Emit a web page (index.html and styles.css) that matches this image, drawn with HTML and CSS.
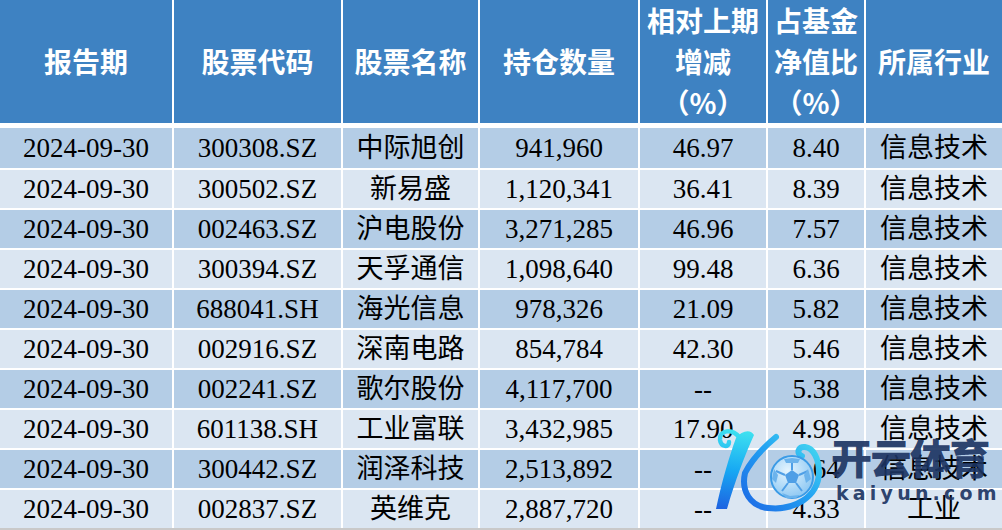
FILE: index.html
```html
<!DOCTYPE html>
<html lang="zh-CN">
<head>
<meta charset="utf-8">
<title>持仓</title>
<link rel="stylesheet" href="styles.css">
</head>
<body>
<div class="sheet">
  <div class="row head">
    <div class="cell">报告期</div>
    <div class="cell">股票代码</div>
    <div class="cell">股票名称</div>
    <div class="cell">持仓数量</div>
    <div class="cell multi">相对上期<br>增减<br>（%）</div>
    <div class="cell multi">占基金<br>净值比<br>（%）</div>
    <div class="cell">所属行业</div>
  </div>
  <div class="row data dark first">
    <div class="cell">2024-09-30</div><div class="cell">300308.SZ</div><div class="cell">中际旭创</div><div class="cell">941,960</div><div class="cell">46.97</div><div class="cell">8.40</div><div class="cell">信息技术</div>
  </div>
  <div class="row data light">
    <div class="cell">2024-09-30</div><div class="cell">300502.SZ</div><div class="cell">新易盛</div><div class="cell">1,120,341</div><div class="cell">36.41</div><div class="cell">8.39</div><div class="cell">信息技术</div>
  </div>
  <div class="row data dark">
    <div class="cell">2024-09-30</div><div class="cell">002463.SZ</div><div class="cell">沪电股份</div><div class="cell">3,271,285</div><div class="cell">46.96</div><div class="cell">7.57</div><div class="cell">信息技术</div>
  </div>
  <div class="row data light">
    <div class="cell">2024-09-30</div><div class="cell">300394.SZ</div><div class="cell">天孚通信</div><div class="cell">1,098,640</div><div class="cell">99.48</div><div class="cell">6.36</div><div class="cell">信息技术</div>
  </div>
  <div class="row data dark">
    <div class="cell">2024-09-30</div><div class="cell">688041.SH</div><div class="cell">海光信息</div><div class="cell">978,326</div><div class="cell">21.09</div><div class="cell">5.82</div><div class="cell">信息技术</div>
  </div>
  <div class="row data light">
    <div class="cell">2024-09-30</div><div class="cell">002916.SZ</div><div class="cell">深南电路</div><div class="cell">854,784</div><div class="cell">42.30</div><div class="cell">5.46</div><div class="cell">信息技术</div>
  </div>
  <div class="row data dark">
    <div class="cell">2024-09-30</div><div class="cell">002241.SZ</div><div class="cell">歌尔股份</div><div class="cell">4,117,700</div><div class="cell">--</div><div class="cell">5.38</div><div class="cell">信息技术</div>
  </div>
  <div class="row data light">
    <div class="cell">2024-09-30</div><div class="cell">601138.SH</div><div class="cell">工业富联</div><div class="cell">3,432,985</div><div class="cell">17.90</div><div class="cell">4.98</div><div class="cell">信息技术</div>
  </div>
  <div class="row data dark">
    <div class="cell">2024-09-30</div><div class="cell">300442.SZ</div><div class="cell">润泽科技</div><div class="cell">2,513,892</div><div class="cell">--</div><div class="cell">4.64</div><div class="cell">信息技术</div>
  </div>
  <div class="row data light">
    <div class="cell">2024-09-30</div><div class="cell">002837.SZ</div><div class="cell">英维克</div><div class="cell">2,887,720</div><div class="cell">--</div><div class="cell">4.33</div><div class="cell">工业</div>
  </div>

  <div class="watermark">
    <svg class="wm-logo" width="120" height="92" viewBox="0 0 120 92">
      <defs>
        <linearGradient id="g1" gradientUnits="userSpaceOnUse" x1="20" y1="4" x2="10" y2="86">
          <stop offset="0" stop-color="#3fe2f0"/>
          <stop offset="0.5" stop-color="#17a8f3"/>
          <stop offset="1" stop-color="#1e5fe0"/>
        </linearGradient>
        <linearGradient id="g2" gradientUnits="userSpaceOnUse" x1="30" y1="88" x2="108" y2="15">
          <stop offset="0" stop-color="#1c64e4"/>
          <stop offset="0.55" stop-color="#22a0f2"/>
          <stop offset="1" stop-color="#48def0"/>
        </linearGradient>
        <radialGradient id="gb" cx="0.4" cy="0.35" r="0.7">
          <stop offset="0" stop-color="#e4f5ff"/>
          <stop offset="1" stop-color="#8ac6f2"/>
        </radialGradient>
      </defs>
      <path d="M27 12 C20 3 7 5 8 15 C9 22 17 23 17 17" fill="none" stroke="url(#g1)" stroke-width="4.5" stroke-linecap="round"/>
      <path d="M24 13 C30 5 39 4 42 10 C33 30 23 56 15 84 L4 84 C10 56 17 32 24 13 Z" fill="url(#g1)"/>
      <path d="M64 12 C52 22 40 34 33 48 C29 66 38 81 56 83 C82 86 106 72 107 48 C107 33 101 23 93 22 C86 21 84 29 90 31" fill="none" stroke="url(#g2)" stroke-width="6" stroke-linecap="round" stroke-linejoin="round"/>
      <circle cx="80" cy="52" r="21" fill="url(#gb)" stroke="#3b9be6" stroke-width="2"/>
      <polygon points="80,45 87,50 84,58 76,58 73,50" fill="#4f9fe6"/>
      <path d="M80 45 L80 35 M87 50 L96 46 M84 58 L90 66 M76 58 L70 66 M73 50 L64 46" stroke="#4f9fe6" stroke-width="2"/>
      <path d="M72 34 L80 33 L88 34 L86 38 L74 38 Z" fill="#6bb3ec"/>
      <path d="M96 44 L99 54 L94 58 L92 50 Z" fill="#6bb3ec"/>
      <path d="M62 44 L66 50 L64 58 L60 54 Z" fill="#6bb3ec"/>
      <path d="M70 68 L78 71 L88 70 L84 73 L74 73 Z" fill="#6bb3ec"/>
    </svg>
    <div class="wm-cn">开云体育</div>
    <div class="wm-en">kaiyun.com</div>
  </div>
</div>
</body>
</html>
```
FILE: styles.css
```css
html, body {
  margin: 0;
  padding: 0;
}
body {
  background: #c9c9c9;
  width: 1002px;
  height: 530px;
  overflow: hidden;
}
.sheet {
  position: relative;
  width: 1002px;
  height: 528px;
  background: #ffffff;
  display: flex;
  flex-direction: column;
  gap: 2px;
  overflow: hidden;
}
.row {
  display: grid;
  grid-template-columns: 172px 167px 135px 158px 126px 96px 136px;
  column-gap: 2px;
  height: 38px;
  flex: none;
}
.cell {
  display: flex;
  align-items: center;
  justify-content: center;
  text-align: center;
  white-space: nowrap;
}
.head {
  height: 122px;
  margin-bottom: 4px;
}
.head .cell {
  background: #3e82c2;
  color: #ffffff;
  font-family: "Noto Sans CJK SC", "Liberation Sans", sans-serif;
  font-weight: 700;
  font-size: 28px;
  line-height: 41px;
}
.data .cell {
  font-family: "Liberation Serif", "Noto Sans CJK SC", serif;
  font-size: 27px;
  color: #000000;
  line-height: 1;
}
.first {
  height: 40px;
}
.dark .cell {
  background: #b4cde6;
}
.light .cell {
  background: #dbe6f2;
}
.watermark {
  position: absolute;
  left: 0;
  top: 0;
  width: 1002px;
  height: 528px;
  pointer-events: none;
}
.wm-logo {
  position: absolute;
  left: 712px;
  top: 425px;
}
.wm-cn {
  position: absolute;
  left: 831px;
  top: 432px;
  font-family: "Noto Sans CJK SC", sans-serif;
  font-weight: 900;
  font-size: 41px;
  line-height: 1.2;
  letter-spacing: -1.5px;
  color: rgba(28, 52, 98, 0.93);
}
.wm-en {
  position: absolute;
  left: 836px;
  top: 482px;
  font-family: "DejaVu Sans", sans-serif;
  font-weight: 700;
  font-size: 19px;
  line-height: 1.2;
  letter-spacing: 4.2px;
  color: rgba(28, 52, 98, 0.93);
}
```
